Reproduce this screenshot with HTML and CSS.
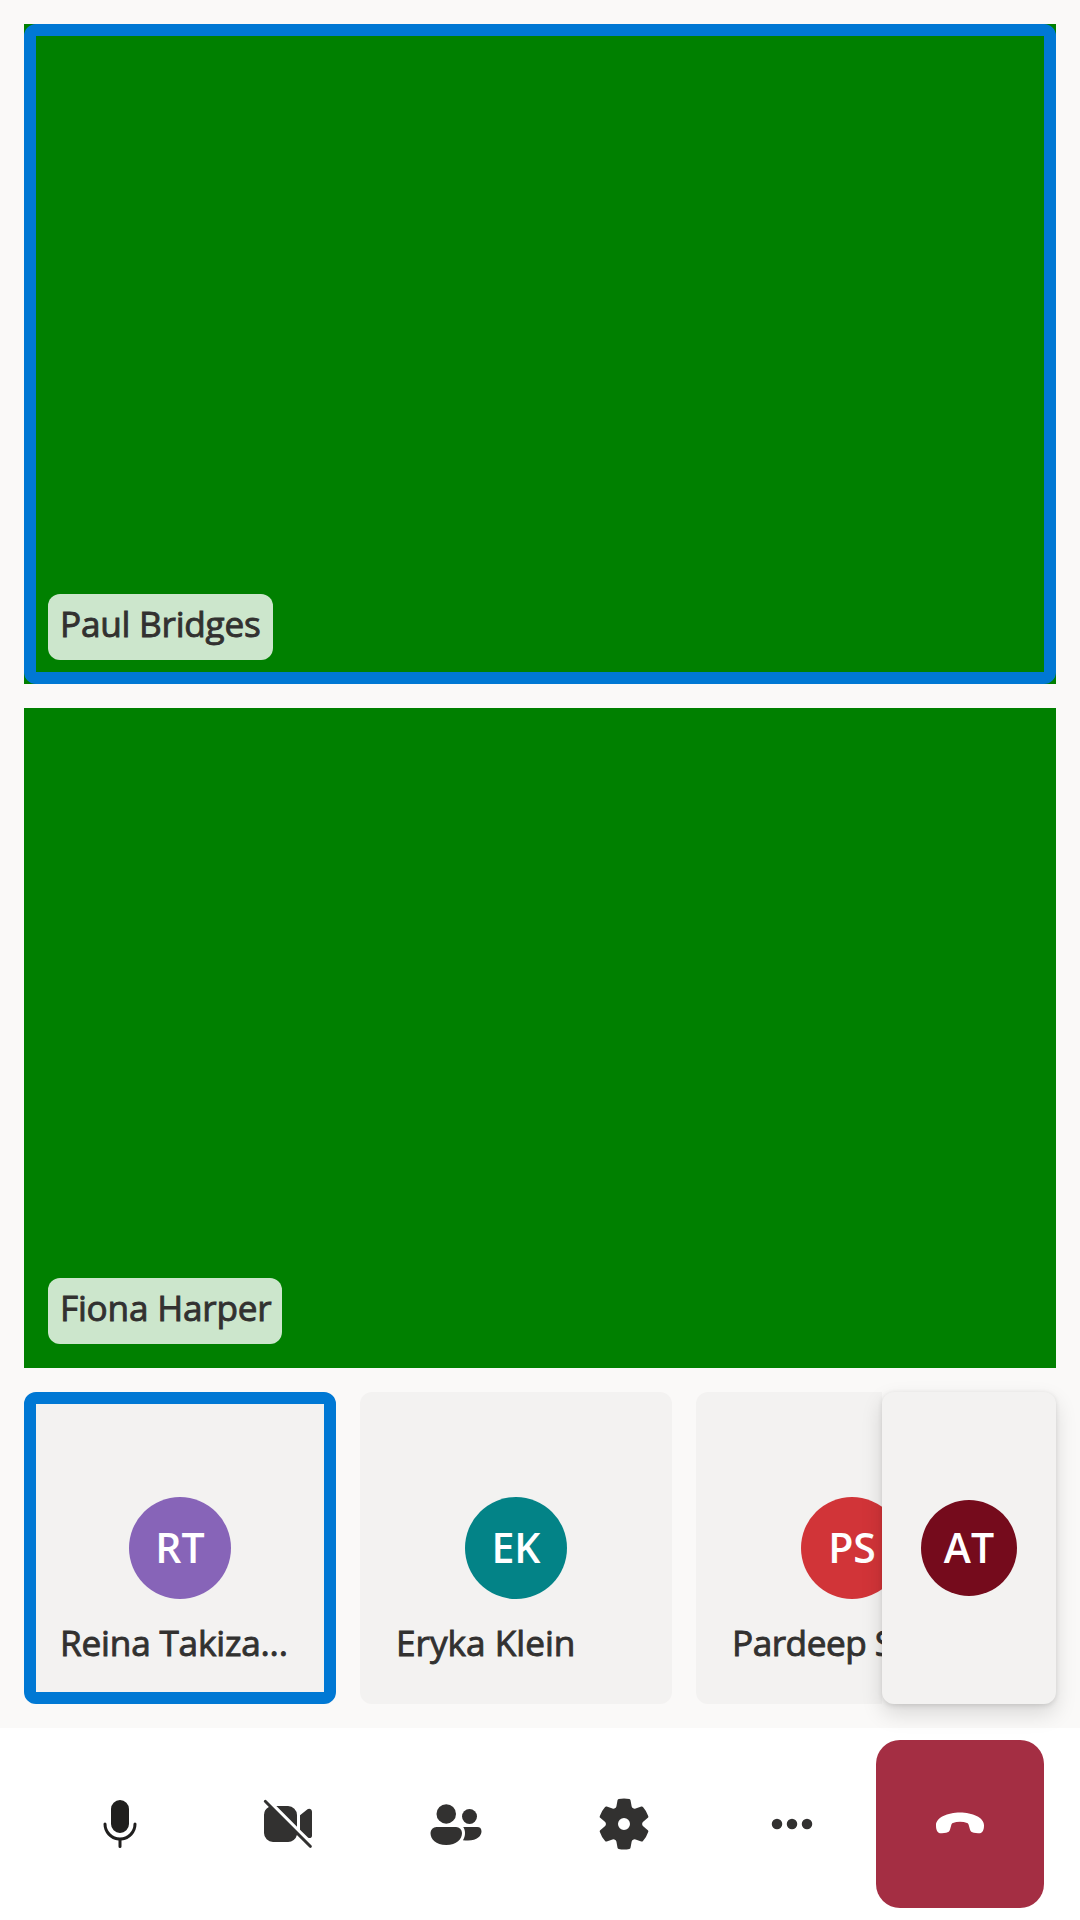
FILE: index.html
```html
<!DOCTYPE html>
<html lang="en">
<head>
<meta charset="utf-8">
<title>Call</title>
<link rel="stylesheet" href="styles.css">
</head>
<body>
<div class="call">
  <main class="stage">
    <section class="video speaking"><span class="name-tag paul">Paul Bridges</span></section>
    <section class="video"><span class="name-tag fiona">Fiona Harper</span></section>
    <section class="gallery">
      <div class="strip">
        <article class="tile speaking">
          <div class="avatar purple">RT</div>
          <div class="tile-name reina">Reina Takiza...</div>
        </article>
        <article class="tile">
          <div class="avatar teal">EK</div>
          <div class="tile-name eryka">Eryka Klein</div>
        </article>
        <article class="tile">
          <div class="avatar red">PS</div>
          <div class="tile-name pardeep">Pardeep S...</div>
        </article>
      </div>
      <article class="self"><div class="avatar small maroon">AT</div></article>
    </section>
  </main>
  <nav class="controls">
    <button class="control mic" aria-label="Mute">
      <svg viewBox="0 0 20 20"><path d="M10 13a3 3 0 0 0 3-3V5a3 3 0 0 0-6 0v5a3 3 0 0 0 3 3ZM5.5 10a.5.5 0 0 0-1 0 5.5 5.5 0 0 0 5 5.48v2.02a.5.5 0 0 0 1 0v-2.02a5.5 5.5 0 0 0 5-5.48.5.5 0 0 0-1 0 4.500 4.500 0 1 1-9 0Z"/></svg>
    </button>
    <button class="control" aria-label="Turn camera on">
      <svg viewBox="0 0 20 20"><path d="M2.850 2.150a.5.5 0 1 0-.7.7L3.620 4.330A3 3 0 0 0 2 7v6a3 3 0 0 0 3 3h5a3 3 0 0 0 2.970-2.320l4.180 4.170a.5.5 0 0 0 .7-.7l-15-15Z"/><path d="M6.120 4 13 10.880V7a3 3 0 0 0-3-3H6.120ZM14 7.050v4.830l2.650 2.650c.55.4 1.350.1 1.350-.65V5.920c0-.8-.9-1.250-1.500-.8L14 7.050Z"/></svg>
    </button>
    <button class="control" aria-label="People">
      <svg viewBox="0 0 20 20"><circle cx="6.750" cy="6.650" r="3.250"/><circle cx="14.500" cy="7.500" r="2.500"/><path d="M3.500 11a2 2 0 0 0-2 2c0 2 1.750 4 5.250 4S12 15 12 13a2 2 0 0 0-2-2H3.500ZM12.400 11c.38.55.6 1.250.6 2 0 .85-.22 1.700-.68 2.420.54.08 1.120.1 1.680.1 3.100 0 4.500-1.620 4.500-3.100A1.450 1.450 0 0 0 17.050 11H12.400Z"/></svg>
    </button>
    <button class="control" aria-label="Settings">
      <svg viewBox="0 0 20 20"><path d="M1.91 7.38A8.5 8.5 0 0 1 3.7 4.3a.5.5 0 0 1 .54-.13l1.92.68a1 1 0 0 0 1.32-.76l.36-2a.5.5 0 0 1 .4-.4 8.53 8.53 0 0 1 3.55 0c.2.04.35.2.38.4l.37 2a1 1 0 0 0 1.32.76l1.92-.68a.5.5 0 0 1 .54.13 8.5 8.5 0 0 1 1.78 3.08c.06.2 0 .4-.15.54l-1.56 1.32a1 1 0 0 0 0 1.52l1.56 1.32a.5.5 0 0 1 .15.54 8.5 8.5 0 0 1-1.78 3.08.5.5 0 0 1-.54.13l-1.92-.68a1 1 0 0 0-1.32.76l-.37 2a.5.5 0 0 1-.38.4 8.53 8.53 0 0 1-3.56 0 .5.5 0 0 1-.39-.4l-.36-2a1 1 0 0 0-1.32-.76l-1.92.68a.5.5 0 0 1-.54-.13 8.5 8.5 0 0 1-1.78-3.08.5.5 0 0 1 .15-.54l1.56-1.32a1 1 0 0 0 0-1.52L2.06 7.92a.5.5 0 0 1-.15-.54ZM8 10a2 2 0 1 0 4 0 2 2 0 0 0-4 0Z"/></svg>
    </button>
    <button class="control" aria-label="More">
      <svg viewBox="0 0 20 20"><circle cx="5" cy="10" r="1.75"/><circle cx="10" cy="10" r="1.75"/><circle cx="15" cy="10" r="1.75"/></svg>
    </button>
    <button class="control leave" aria-label="Leave">
      <svg viewBox="0 0 20 20"><path d="M10 6.2C5.900 6.200 2 7.900 2 10.400c0 1.600.45 2.850 2 2.700l1.400-.18c.7-.1 1.100-.42 1.300-1.150l.4-1.450c.12-.45.2-.5.550-.65.700-.27 1.500-.4 2.350-.4s1.650.13 2.350.4c.35.15.430.2.550.650l.4 1.450c.2.730.6 1.050 1.300 1.150l1.400.18c1.550.15 2-1.100 2-2.700 0-2.500-3.900-4.200-8-4.200Z"/></svg>
    </button>
  </nav>
</div>
</body>
</html>
```
FILE: styles.css
```css
* { box-sizing: border-box; }

body {
  margin: 0;
  background: #faf9f8;
  color: #323130;
  font-family: "Open Sans", "Noto Sans", sans-serif;
  font-weight: 600;
}

.call {
  width: 1080px;
  height: 1920px;
  display: flex;
  flex-direction: column;
  overflow: hidden;
}

.stage {
  flex: 1;
  display: flex;
  flex-direction: column;
  gap: 24px;
  padding: 24px;
}

.video {
  position: relative;
  flex: 1;
  display: flex;
  align-items: flex-end;
  padding: 24px;
  background: #008000;
}

/* Active speaker outline, laid over the video */
.speaking::after {
  content: "";
  position: absolute;
  inset: 0;
  border: 12px solid #0078d4;
  border-radius: 12px;
}

/* Regular weight thickened by a thin stroke, for a medium weight */
.name-tag,
.tile-name {
  font-size: 35.2px;
  font-weight: 400;
  -webkit-text-stroke: 0.9px currentColor;
  white-space: nowrap;
}

.name-tag {
  height: 66px;
  padding: 0 12px;
  border-radius: 12px;
  background: rgba(255, 255, 255, 0.8);
  line-height: 58px;
}

.paul { width: 225px; letter-spacing: -0.25px; }
.fiona { width: 234px; letter-spacing: -0.22px; }

.gallery {
  height: 312px;
  display: flex;
}

.strip {
  flex: 1;
  min-width: 0;
  display: flex;
  gap: 24px;
  overflow: hidden;
}

.tile {
  position: relative;
  flex: 0 0 312px;
  min-width: 0;
  display: flex;
  flex-direction: column;
  align-items: center;
  padding: 105px 24px 0 36px;
  border-radius: 12px;
  background: #f3f2f1;
}

.avatar {
  flex: none;
  width: 102px;
  height: 102px;
  margin-right: 12px;
  border-radius: 50%;
  color: #fff;
  font-size: 41px;
  line-height: 100px;
  text-align: center;
}

.small {
  width: 96px;
  height: 96px;
  margin: 0;
  line-height: 94px;
}

.purple { background: #8764b8; }
.teal { background: #038387; }
.red { background: #d13438; }
.maroon { background: #750b1c; }

.tile-name {
  align-self: stretch;
  margin-top: 19px;
  line-height: 48px;
}

.reina { letter-spacing: -0.2px; }
.eryka { letter-spacing: 0; }
.pardeep { letter-spacing: -0.5px; }

.self {
  position: relative;
  z-index: 1;
  width: 174px;
  display: flex;
  align-items: center;
  justify-content: center;
  border-radius: 12px;
  background: #f3f2f1;
  box-shadow: 0 9.6px 21.6px rgba(0, 0, 0, 0.132), 0 1.8px 5.4px rgba(0, 0, 0, 0.108);
}

.controls {
  height: 192px;
  display: flex;
  justify-content: center;
  align-items: center;
  background: #fff;
}

.control {
  width: 168px;
  height: 168px;
  display: flex;
  align-items: center;
  justify-content: center;
  padding: 0;
  border: 0;
  background: transparent;
  color: #323130;
}

.control svg {
  width: 60px;
  height: 60px;
  fill: currentColor;
}

.mic { color: #201f1e; }

.leave {
  border-radius: 24px;
  background: #a42e43;
  color: #fff;
}
```
